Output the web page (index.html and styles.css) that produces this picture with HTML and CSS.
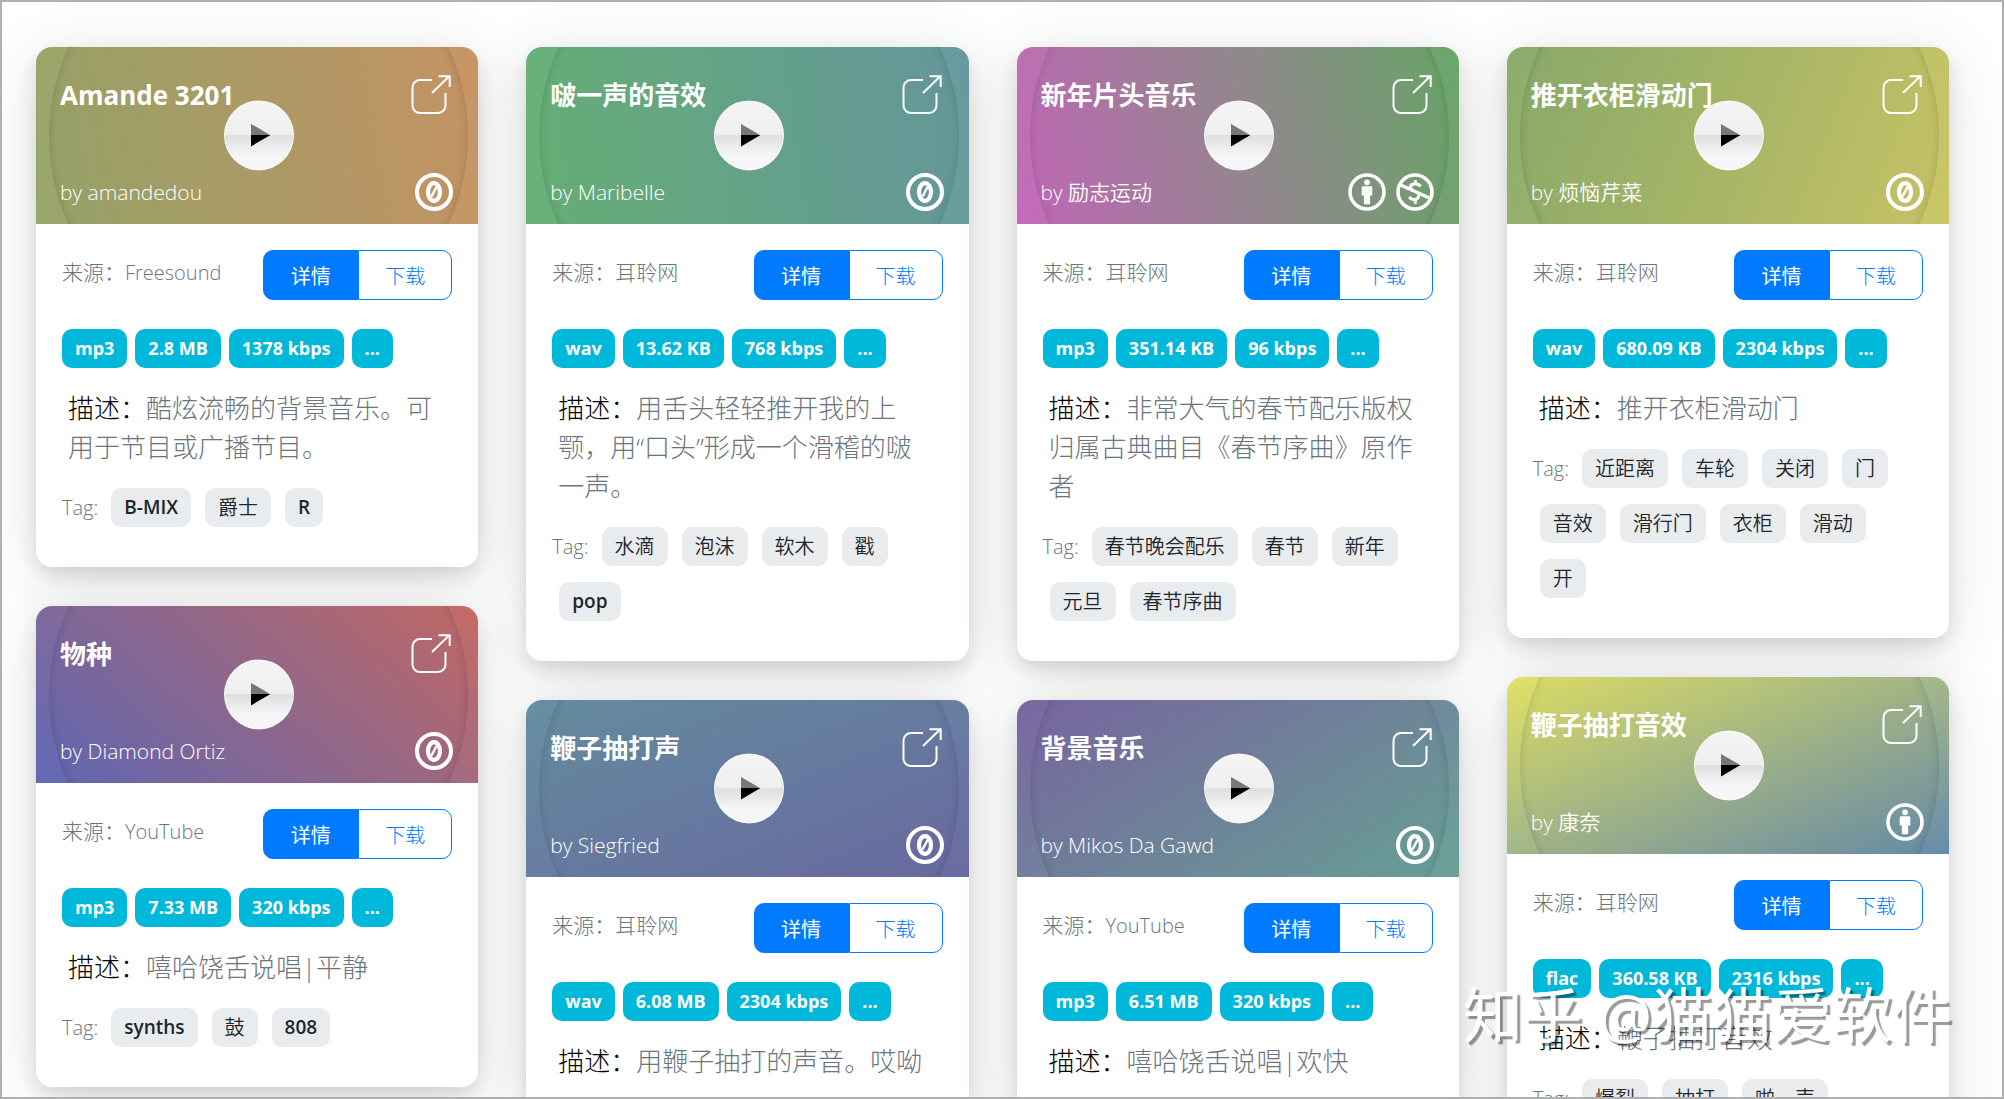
FILE: index.html
```html
<!DOCTYPE html>
<html lang="zh-CN">
<head>
<meta charset="utf-8">
<meta name="viewport" content="width=device-width, initial-scale=1">
<title>音效素材</title>
<link rel="stylesheet" href="styles.css">
</head>
<body>
<svg class="sprite" aria-hidden="true">
  <symbol id="open" viewBox="0 0 42 40">
    <path d="M21 5H9a7.500 7.500 0 0 0-7.500 7.500V31A7.500 7.500 0 0 0 9 38h18a7.500 7.500 0 0 0 7.500-7.500V18M21 18 38 1.500M27.500 1.300H38.700V12" fill="none" stroke="currentColor" stroke-width="2"/>
  </symbol>
  <symbol id="zero" viewBox="0 0 38 38">
    <circle cx="19" cy="19" r="17" fill="none" stroke="currentColor" stroke-width="4"/>
    <ellipse cx="19" cy="19" rx="6" ry="8.800" fill="none" stroke="currentColor" stroke-width="4.200"/>
    <path d="M16.500 23.500 21.500 14" stroke="currentColor" stroke-width="2.400"/>
  </symbol>
  <symbol id="by" viewBox="0 0 38 38">
    <circle cx="19" cy="19" r="17" fill="none" stroke="currentColor" stroke-width="3.600"/>
    <circle cx="19" cy="9.300" r="2.900" fill="currentColor"/>
    <path d="M15 13.200h8q1.300 0 1.300 1.300v8h-2.200v8.800h-6.200v-8.800h-2.200v-8q0-1.300 1.300-1.300z" fill="currentColor"/>
  </symbol>
  <symbol id="nc" viewBox="0 0 38 38">
    <g fill="none" stroke="currentColor">
      <circle cx="19" cy="19" r="17" stroke-width="3.600"/>
      <path d="M3.500 11.500 34.500 25.500" stroke-width="3.400"/>
      <path d="M24.500 13.500C22.500 9.800 14.500 9.800 14.500 14.200c0 1.300.8 2.200 2 2.800M22.500 21.500c1.600 4.800-6 7-9.300 2.500" stroke-width="3.200"/>
      <path d="M19.300 7v4.500M19.300 25.500V31" stroke-width="2.800"/>
    </g>
  </symbol>
  <symbol id="play" viewBox="0 0 20 24">
    <path d="M0 .5V11.500H19z" fill="#777"/>
    <path d="M0 11.500H19.500L0 23z" fill="#000"/>
  </symbol>
</svg>

<main class="board">
  <div class="column">
    <article class="card">
      <header class="cover cover-olive">
        <div class="disc"><button class="play" type="button" aria-label="播放"><svg><use href="#play"/></svg></button></div>
        <div class="cover-row"><h2>Amande 3201</h2><a class="open" href="#" aria-label="打开"><svg><use href="#open"/></svg></a></div>
        <div class="cover-row"><p>by amandedou</p><span class="license"><svg><use href="#zero"/></svg></span></div>
      </header>
      <div class="content">
        <div class="source-row"><p class="source">来源：<span class="latin">Freesound</span></p><div class="actions"><button class="primary" type="button">详情</button><button type="button">下载</button></div></div>
        <div class="facts"><span>mp3</span><span>2.8 MB</span><span>1378 kbps</span><span>...</span></div>
        <p class="about"><b>描述：</b>酷炫流畅的背景音乐。可用于节目或广播节目。</p>
        <div class="tags">Tag:<span class="latin">B-MIX</span><span>爵士</span><span class="latin">R</span></div>
      </div>
    </article>
    <article class="card">
      <header class="cover cover-dusk">
        <div class="disc"><button class="play" type="button" aria-label="播放"><svg><use href="#play"/></svg></button></div>
        <div class="cover-row"><h2>物种</h2><a class="open" href="#" aria-label="打开"><svg><use href="#open"/></svg></a></div>
        <div class="cover-row"><p>by Diamond Ortiz</p><span class="license"><svg><use href="#zero"/></svg></span></div>
      </header>
      <div class="content">
        <div class="source-row"><p class="source">来源：<span class="latin">YouTube</span></p><div class="actions"><button class="primary" type="button">详情</button><button type="button">下载</button></div></div>
        <div class="facts"><span>mp3</span><span>7.33 MB</span><span>320 kbps</span><span>...</span></div>
        <p class="about"><b>描述：</b>嘻哈饶舌说唱|平静</p>
        <div class="tags">Tag:<span class="latin">synths</span><span>鼓</span><span class="latin">808</span></div>
      </div>
    </article>
  </div>

  <div class="column">
    <article class="card">
      <header class="cover cover-green">
        <div class="disc"><button class="play" type="button" aria-label="播放"><svg><use href="#play"/></svg></button></div>
        <div class="cover-row"><h2>啵一声的音效</h2><a class="open" href="#" aria-label="打开"><svg><use href="#open"/></svg></a></div>
        <div class="cover-row"><p>by Maribelle</p><span class="license"><svg><use href="#zero"/></svg></span></div>
      </header>
      <div class="content">
        <div class="source-row"><p class="source">来源：耳聆网</p><div class="actions"><button class="primary" type="button">详情</button><button type="button">下载</button></div></div>
        <div class="facts"><span>wav</span><span>13.62 KB</span><span>768 kbps</span><span>...</span></div>
        <p class="about"><b>描述：</b>用舌头轻轻推开我的上颚，用“口头”形成一个滑稽的啵一声。</p>
        <div class="tags">Tag:<span>水滴</span><span>泡沫</span><span>软木</span><span>戳</span><span class="latin">pop</span></div>
      </div>
    </article>
    <article class="card">
      <header class="cover cover-steel">
        <div class="disc"><button class="play" type="button" aria-label="播放"><svg><use href="#play"/></svg></button></div>
        <div class="cover-row"><h2>鞭子抽打声</h2><a class="open" href="#" aria-label="打开"><svg><use href="#open"/></svg></a></div>
        <div class="cover-row"><p>by Siegfried</p><span class="license"><svg><use href="#zero"/></svg></span></div>
      </header>
      <div class="content">
        <div class="source-row"><p class="source">来源：耳聆网</p><div class="actions"><button class="primary" type="button">详情</button><button type="button">下载</button></div></div>
        <div class="facts"><span>wav</span><span>6.08 MB</span><span>2304 kbps</span><span>...</span></div>
        <p class="about"><b>描述：</b>用鞭子抽打的声音。哎呦</p>
      </div>
    </article>
  </div>

  <div class="column">
    <article class="card">
      <header class="cover cover-orchid">
        <div class="disc"><button class="play" type="button" aria-label="播放"><svg><use href="#play"/></svg></button></div>
        <div class="cover-row"><h2>新年片头音乐</h2><a class="open" href="#" aria-label="打开"><svg><use href="#open"/></svg></a></div>
        <div class="cover-row"><p>by 励志运动</p><span class="license"><svg><use href="#by"/></svg><svg><use href="#nc"/></svg></span></div>
      </header>
      <div class="content">
        <div class="source-row"><p class="source">来源：耳聆网</p><div class="actions"><button class="primary" type="button">详情</button><button type="button">下载</button></div></div>
        <div class="facts"><span>mp3</span><span>351.14 KB</span><span>96 kbps</span><span>...</span></div>
        <p class="about"><b>描述：</b>非常大气的春节配乐版权归属古典曲目《春节序曲》原作者</p>
        <div class="tags">Tag:<span>春节晚会配乐</span><span>春节</span><span>新年</span><span>元旦</span><span>春节序曲</span></div>
      </div>
    </article>
    <article class="card">
      <header class="cover cover-violet">
        <div class="disc"><button class="play" type="button" aria-label="播放"><svg><use href="#play"/></svg></button></div>
        <div class="cover-row"><h2>背景音乐</h2><a class="open" href="#" aria-label="打开"><svg><use href="#open"/></svg></a></div>
        <div class="cover-row"><p>by Mikos Da Gawd</p><span class="license"><svg><use href="#zero"/></svg></span></div>
      </header>
      <div class="content">
        <div class="source-row"><p class="source">来源：<span class="latin">YouTube</span></p><div class="actions"><button class="primary" type="button">详情</button><button type="button">下载</button></div></div>
        <div class="facts"><span>mp3</span><span>6.51 MB</span><span>320 kbps</span><span>...</span></div>
        <p class="about"><b>描述：</b>嘻哈饶舌说唱|欢快</p>
      </div>
    </article>
  </div>

  <div class="column">
    <article class="card">
      <header class="cover cover-moss">
        <div class="disc"><button class="play" type="button" aria-label="播放"><svg><use href="#play"/></svg></button></div>
        <div class="cover-row"><h2>推开衣柜滑动门</h2><a class="open" href="#" aria-label="打开"><svg><use href="#open"/></svg></a></div>
        <div class="cover-row"><p>by 烦恼芹菜</p><span class="license"><svg><use href="#zero"/></svg></span></div>
      </header>
      <div class="content">
        <div class="source-row"><p class="source">来源：耳聆网</p><div class="actions"><button class="primary" type="button">详情</button><button type="button">下载</button></div></div>
        <div class="facts"><span>wav</span><span>680.09 KB</span><span>2304 kbps</span><span>...</span></div>
        <p class="about"><b>描述：</b>推开衣柜滑动门</p>
        <div class="tags">Tag:<span>近距离</span><span>车轮</span><span>关闭</span><span>门</span><span>音效</span><span>滑行门</span><span>衣柜</span><span>滑动</span><span>开</span></div>
      </div>
    </article>
    <article class="card">
      <header class="cover cover-lemon">
        <div class="disc"><button class="play" type="button" aria-label="播放"><svg><use href="#play"/></svg></button></div>
        <div class="cover-row"><h2>鞭子抽打音效</h2><a class="open" href="#" aria-label="打开"><svg><use href="#open"/></svg></a></div>
        <div class="cover-row"><p>by 康奈</p><span class="license"><svg><use href="#by"/></svg></span></div>
      </header>
      <div class="content">
        <div class="source-row"><p class="source">来源：耳聆网</p><div class="actions"><button class="primary" type="button">详情</button><button type="button">下载</button></div></div>
        <div class="facts"><span>flac</span><span>360.58 KB</span><span>2316 kbps</span><span>...</span></div>
        <p class="about"><b>描述：</b>鞭子抽打音效</p>
        <div class="tags">Tag:<span>爆裂</span><span>抽打</span><span>啪一声</span></div>
      </div>
    </article>
  </div>
</main>
<div class="watermark">知乎 @猫猫爱软件</div>
</body>
</html>
```
FILE: styles.css
```css
* { box-sizing: border-box; }

body {
  margin: 0;
  font-family: "Open Sans", "Noto Sans CJK SC", sans-serif;
  font-weight: 300;
  color: #6c757d;
  background: #fff;
}

h2, p { margin: 0; }
svg { display: block; }
.sprite { display: none; }

.board {
  height: 100vh;
  overflow: hidden;
  border: 2px solid #b0b0b0;
  padding: 45px 53px 0 34px;
  display: grid;
  grid-template-columns: repeat(4, minmax(0, 1fr));
  gap: 48px;
}

.column {
  display: flex;
  flex-direction: column;
  gap: 39px;
}

.card {
  border-radius: 16px;
  background: #fff;
  box-shadow: 0 8px 16px rgba(33, 37, 41, 0.12), 0 10px 60px rgba(33, 37, 41, 0.15);
}

/* cover */
.cover {
  position: relative;
  height: 177px;
  padding: 28px 25px 13px 24px;
  border-radius: 16px 16px 0 0;
  overflow: hidden;
  color: #fff;
  display: flex;
  flex-direction: column;
  justify-content: space-between;
}
.cover-olive { background: linear-gradient(80deg, #97a66a, #c99566); }
.cover-dusk { background: linear-gradient(42deg, #6169b6, #c46b66); }
.cover-green { background: linear-gradient(82deg, #68b277, #679a9f); }
.cover-steel { background: linear-gradient(158deg, #668fa2, #6b6ba3); }
.cover-orchid { background: linear-gradient(76deg, #c569bb, #69a869); }
.cover-violet { background: linear-gradient(148deg, #7a66a2, #69a398); }
.cover-moss { background: linear-gradient(112deg, #8aac6c, #cbc668); }
.cover-lemon { background: linear-gradient(158deg, #e0e166, #668cab); }

.disc {
  position: absolute;
  left: 13px;
  right: 10px;
  top: 50%;
  transform: translateY(-50%);
  aspect-ratio: 1;
  border-radius: 50%;
  box-shadow: inset 0 0 8px rgba(0, 0, 0, 0.16);
  background: rgba(0, 0, 0, 0.02);
  display: grid;
  place-items: center;
}
.play {
  width: 70px;
  height: 70px;
  padding: 0 0 0 4px;
  border: 1px solid rgba(255, 255, 255, 0.7);
  border-radius: 50%;
  background: linear-gradient(#f5f5f5 0, #efefef 49%, #dedede 50%, #f6f6f8 80%);
  display: grid;
  place-items: center;
}
.play svg { width: 20px; height: 24px; }

.cover-row {
  position: relative;
  display: flex;
  justify-content: space-between;
  align-items: center;
  pointer-events: none;
}
.cover-row a { pointer-events: auto; }
.cover h2 {
  font-size: 26px;
  line-height: 40px;
  font-weight: 700;
}
.cover p { font-size: 21px; line-height: 38px; font-weight: 350; }
.open { color: #fff; }
.open svg { width: 42px; height: 40px; }
.license { display: flex; gap: 10px; }
.license svg { width: 38px; height: 38px; }

/* details */
.content { padding: 26px 26px 40px; }

.source-row {
  display: flex;
  justify-content: space-between;
  align-items: flex-start;
}
.source { font-size: 21px; line-height: 44px; }
.source .latin { font-size: 20px; }

.actions { display: flex; }
.actions button {
  width: 94px;
  height: 50px;
  padding: 0;
  border: 1px solid #007bff;
  border-radius: 0 10px 10px 0;
  background: #fff;
  color: #007bff;
  font: inherit;
  font-size: 20px;
}
.actions .primary {
  width: 95px;
  border-radius: 10px 0 0 10px;
  background: #007bff;
  color: #fff;
  font-weight: 400;
}

.facts {
  display: flex;
  gap: 8px;
  margin-top: 29px;
}
.facts span {
  padding: 0 13px;
  border-radius: 10px;
  background: #00b8d9;
  color: #fff;
  font-size: 18px;
  font-weight: 700;
  line-height: 39px;
}

.about {
  margin: 21px 6px 0;
  font-size: 26px;
  line-height: 39px;
}
.about b { font-weight: 300; color: #000; }

.tags {
  display: flex;
  flex-wrap: wrap;
  row-gap: 16px;
  margin-top: 21px;
  font-size: 20px;
  line-height: 39px;
}
.tags span {
  margin: 0 7px;
  padding: 0 13px;
  border-radius: 10px;
  background: #e9ecef;
  color: #212529;
  font-weight: 350;
}
.tags span:first-child { margin-left: 13px; }
.tags .latin { font-size: 19px; font-weight: 600; }

.watermark {
  position: fixed;
  right: 52px;
  bottom: 48px;
  color: #fff;
  font-size: 60px;
  font-weight: 400;
  line-height: 72px;
  text-shadow: 3px 3px 1px rgba(0, 0, 0, 0.4);
  white-space: nowrap;
  pointer-events: none;
}
```
